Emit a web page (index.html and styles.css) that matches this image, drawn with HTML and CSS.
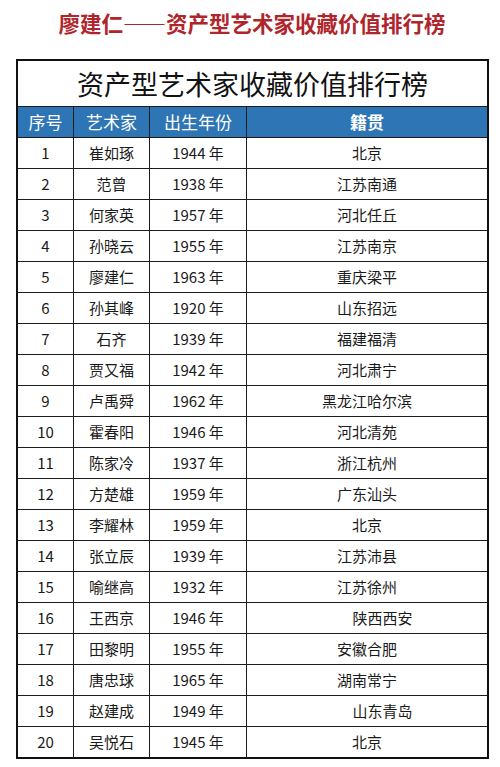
FILE: index.html
```html
<!DOCTYPE html>
<html lang="zh-CN">
<head>
<meta charset="utf-8">
<title>廖建仁——资产型艺术家收藏价值排行榜</title>
<link rel="stylesheet" href="styles.css">
</head>
<body>
<h1 class="headline">廖建仁——资产型艺术家收藏价值排行榜</h1>
<div class="sheet">
  <div class="sheet-title">资产型艺术家收藏价值排行榜</div>
  <div class="row head">
    <div class="cell">序号</div>
    <div class="cell">艺术家</div>
    <div class="cell">出生年份</div>
    <div class="cell strong">籍贯</div>
  </div>
  <div class="row"><div class="cell">1</div><div class="cell">崔如琢</div><div class="cell">1944 年</div><div class="cell">北京</div></div>
  <div class="row"><div class="cell">2</div><div class="cell">范曾</div><div class="cell">1938 年</div><div class="cell">江苏南通</div></div>
  <div class="row"><div class="cell">3</div><div class="cell">何家英</div><div class="cell">1957 年</div><div class="cell">河北任丘</div></div>
  <div class="row"><div class="cell">4</div><div class="cell">孙晓云</div><div class="cell">1955 年</div><div class="cell">江苏南京</div></div>
  <div class="row"><div class="cell">5</div><div class="cell">廖建仁</div><div class="cell">1963 年</div><div class="cell">重庆梁平</div></div>
  <div class="row"><div class="cell">6</div><div class="cell">孙其峰</div><div class="cell">1920 年</div><div class="cell">山东招远</div></div>
  <div class="row"><div class="cell">7</div><div class="cell">石齐</div><div class="cell">1939 年</div><div class="cell">福建福清</div></div>
  <div class="row"><div class="cell">8</div><div class="cell">贾又福</div><div class="cell">1942 年</div><div class="cell">河北肃宁</div></div>
  <div class="row"><div class="cell">9</div><div class="cell">卢禹舜</div><div class="cell">1962 年</div><div class="cell">黑龙江哈尔滨</div></div>
  <div class="row"><div class="cell">10</div><div class="cell">霍春阳</div><div class="cell">1946 年</div><div class="cell">河北清苑</div></div>
  <div class="row"><div class="cell">11</div><div class="cell">陈家冷</div><div class="cell">1937 年</div><div class="cell">浙江杭州</div></div>
  <div class="row"><div class="cell">12</div><div class="cell">方楚雄</div><div class="cell">1959 年</div><div class="cell">广东汕头</div></div>
  <div class="row"><div class="cell">13</div><div class="cell">李耀林</div><div class="cell">1959 年</div><div class="cell">北京</div></div>
  <div class="row"><div class="cell">14</div><div class="cell">张立辰</div><div class="cell">1939 年</div><div class="cell">江苏沛县</div></div>
  <div class="row"><div class="cell">15</div><div class="cell">喻继高</div><div class="cell">1932 年</div><div class="cell">江苏徐州</div></div>
  <div class="row"><div class="cell">16</div><div class="cell">王西京</div><div class="cell">1946 年</div><div class="cell indent">陕西西安</div></div>
  <div class="row"><div class="cell">17</div><div class="cell">田黎明</div><div class="cell">1955 年</div><div class="cell">安徽合肥</div></div>
  <div class="row"><div class="cell">18</div><div class="cell">唐忠球</div><div class="cell">1965 年</div><div class="cell">湖南常宁</div></div>
  <div class="row"><div class="cell">19</div><div class="cell">赵建成</div><div class="cell">1949 年</div><div class="cell indent">山东青岛</div></div>
  <div class="row"><div class="cell">20</div><div class="cell">吴悦石</div><div class="cell">1945 年</div><div class="cell">北京</div></div>
</div>
</body>
</html>
```
FILE: styles.css
```css
html, body {
  margin: 0;
  padding: 0;
  background: #ffffff;
}

body {
  width: 500px;
  font-family: "Noto Sans CJK SC", "Noto Sans", sans-serif;
  color: #1a1a1a;
}

.headline {
  margin: 8px 0 0 0;
  padding-left: 4px;
  height: 30px;
  line-height: 30px;
  font-size: 21.5px;
  font-weight: 700;
  color: #b0252c;
  text-align: center;
  letter-spacing: 0;
}

.sheet {
  box-sizing: border-box;
  width: 473px;
  margin: 21px 0 0 16px;
  border: 2px solid #111111;
}

.sheet-title {
  height: 45px;
  line-height: 45px;
  font-size: 27px;
  text-align: center;
  color: #111111;
}

.row {
  display: grid;
  grid-template-columns: 56px 76px 97px 1fr;
  height: 30px;
  border-top: 1px solid #1c1c1c;
}

.cell {
  border-right: 1px solid #1c1c1c;
  line-height: 30px;
  font-size: 15px;
  text-align: center;
  white-space: nowrap;
}

.cell:last-child {
  border-right: none;
}

.head {
  background: #2e75b6;
}

.head .cell {
  color: #ffffff;
  font-size: 17px;
}

.head .strong {
  font-weight: 700;
}

.indent {
  padding-left: 31px;
}
```
